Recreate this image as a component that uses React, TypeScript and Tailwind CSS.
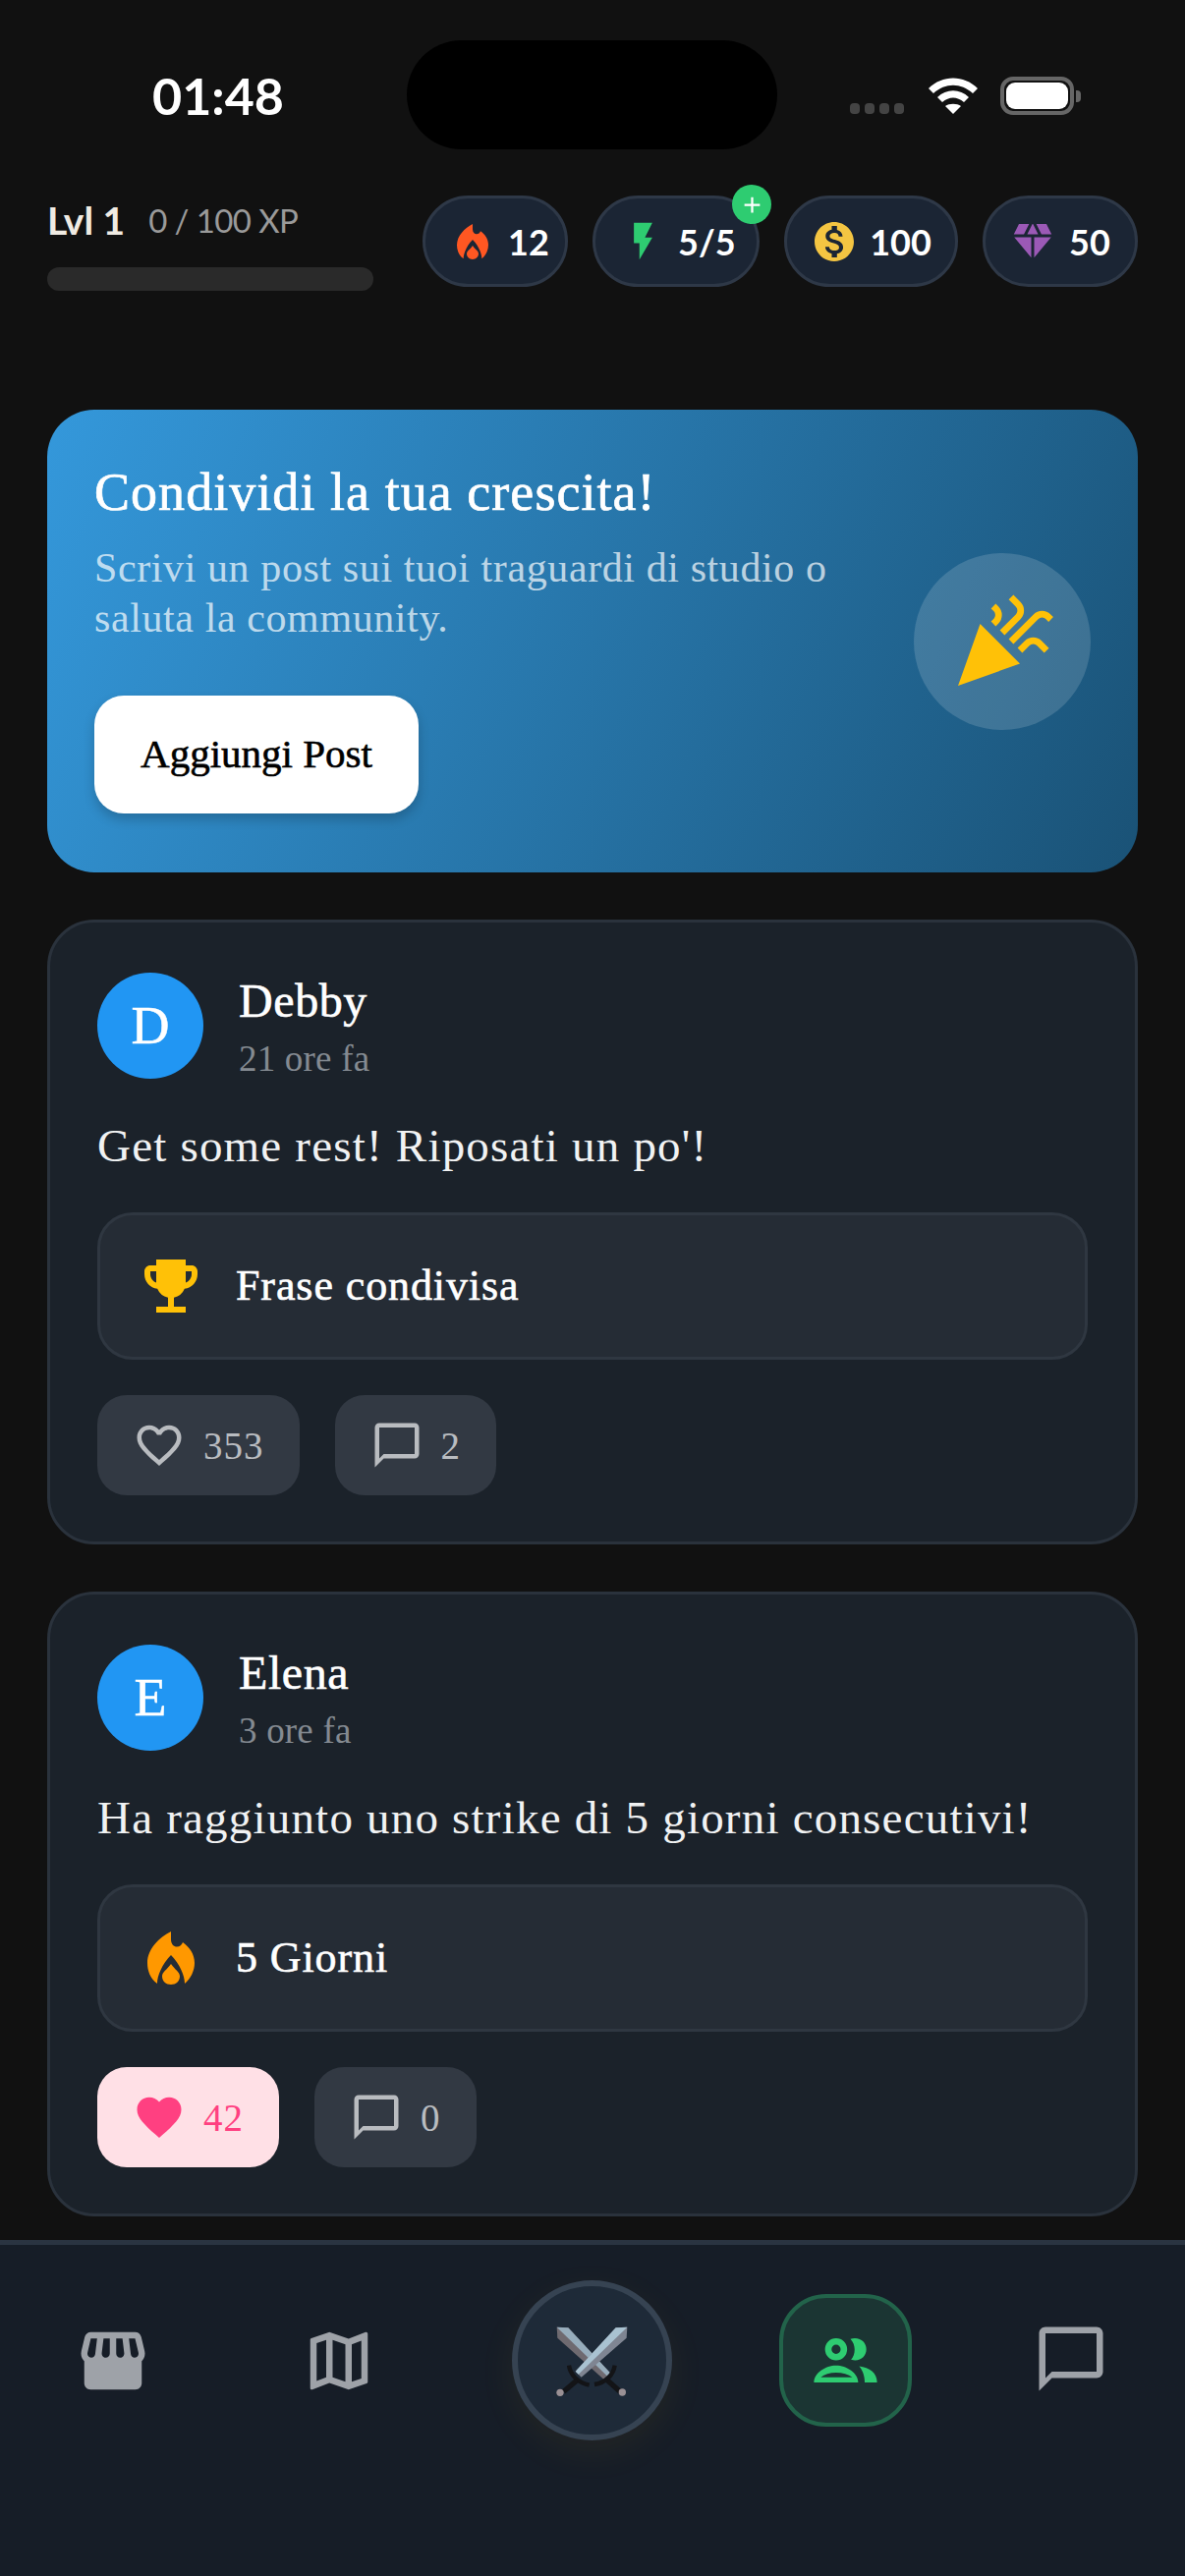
import React from "react";
import {
  MdAdd,
  MdCelebration,
  MdChatBubbleOutline,
  MdDiamond,
  MdEmojiEvents,
  MdFavorite,
  MdFavoriteBorder,
  MdFlashOn,
  MdMonetizationOn,
  MdOutlineMap,
} from "react-icons/md";

function Wifi() {
  return (
    <svg width="50" height="37" viewBox="0 0 50 37" fill="#fff">
      <path d="M0 11C14 -3 36 -3 50 11L45 16C33 5 17 5 5 16Z" />
      <path d="M9 20C18 11 32 11 41 20L36 25C29 19 21 19 14 25Z" />
      <path d="M17 29C21 26 29 26 33 29L25 37Z" />
    </svg>
  );
}

function Flame({ width, height, color }: { width: number; height: number; color: string }) {
  return (
    <svg width={width} height={height} viewBox="0 0 48 54" fill={color}>
      <path d="M10 53C3 48 0 40 0 32C0 18 12 6 24 0L24 8C24 13 27 15.5 30 15.5C33 15.5 35 13.5 36 11C43 16 48 23 48 32C48 40 44 48 38 53C38 45 33 33 24 24C15 33 10 45 10 53Z" />
      <path d="M24 33C28 39 33 41 33 45.5C33 50.5 29 54 24 54C19 54 15 50.5 15 45.5C15 41 20 39 24 33Z" />
    </svg>
  );
}

function Store() {
  return (
    <svg width="78" height="78" viewBox="0 0 24 24" fill="currentColor">
      <path d="M21.9 8.89l-1.05-4.37c-.22-.9-1-1.52-1.91-1.52H5.05c-.9 0-1.69.63-1.9 1.52L2.1 8.89c-.24 1.02-.02 2.06.62 2.88.08.11.19.19.28.29V19c0 1.1.9 2 2 2h14c1.1 0 2-.9 2-2v-6.94c.09-.09.2-.18.28-.28.64-.82.87-1.87.62-2.89zM18.91 4.99l1.05 4.37c.1.42.01.84-.25 1.17-.14.18-.44.47-.94.47-.61 0-1.14-.49-1.21-1.14L16.98 5l1.93-.01zM13 5h1.96l.54 4.52c.05.39-.07.78-.33 1.07-.22.26-.54.41-.95.41-.67 0-1.22-.59-1.22-1.31V5zM8.49 9.52L9.04 5H11v4.69C11 10.41 10.45 11 9.71 11c-.34 0-.65-.15-.89-.41-.25-.29-.37-.68-.33-1.07zM4.04 9.36L5.05 5h1.97l-.58 4.86c-.08.65-.6 1.14-1.21 1.14-.49 0-.8-.29-.93-.47-.27-.32-.36-.75-.26-1.17z" fillRule="evenodd" />
    </svg>
  );
}

function People() {
  return (
    <svg width="67" height="47" viewBox="140 175 202 142" fill="currentColor">
      <circle cx="212" cy="212" r="24" fill="none" stroke="currentColor" strokeWidth="20" />
      <path d="M256 180C285 172 305 190 305 212C305 234 285 252 258 244C272 228 274 198 256 180Z" />
      <path
        fillRule="evenodd"
        d="M144 314C144 285 180 262 212 262C244 262 280 285 280 314ZM165 298H262C250 290 232 284 212 284C192 284 176 290 165 298Z"
      />
      <path d="M283 264C315 268 338 284 338 314H300C300 296 295 278 283 264Z" />
    </svg>
  );
}

function Swords() {
  return (
    <svg width="75" height="72" viewBox="200 200 225 216">
      <polygon points="205,205 240,207 368,345 348,364 207,238" fill="#6f6a70" />
      <polygon points="205,205 240,207 368,345 358,354" fill="#97adbc" />
      <path d="M242 322C246 350 268 374 304 382" fill="none" stroke="#131417" strokeWidth="13" />
      <path d="M360 368L398 402" stroke="#131417" strokeWidth="16" />
      <polygon points="420,205 385,207 262,340 280,358 418,238" fill="#7f8592" />
      <polygon points="420,205 385,207 262,340 271,349" fill="#a9c2d1" />
      <path d="M382 322C378 350 356 374 320 380" fill="none" stroke="#131417" strokeWidth="13" />
      <path d="M266 368L226 402" stroke="#131417" strokeWidth="16" />
      <circle cx="215" cy="405" r="11" fill="#9a9094" />
      <circle cx="405" cy="404" r="11" fill="#9a9094" />
    </svg>
  );
}

function Stat({
  icon,
  value,
  textClass,
  badge,
}: {
  icon: React.ReactNode;
  value: string;
  textClass: string;
  badge?: boolean;
}) {
  return (
    <div className="relative flex h-[93px] items-center gap-[12px] rounded-full border-[3px] border-[#2e3847] bg-[#1b2534] px-[24px]">
      <div className="flex h-[48px] w-[48px] items-center justify-center">{icon}</div>
      <span className={`text-center text-[36px] font-bold leading-none text-white ${textClass}`}>{value}</span>
      {badge && (
        <div className="absolute right-[-15px] top-[-14px] flex h-[40px] w-[40px] items-center justify-center rounded-full bg-[#2ecc71]">
          <MdAdd size={27} color="#fff" />
        </div>
      )}
    </div>
  );
}

function Action({ icon, count, liked }: { icon: React.ReactNode; count: string; liked?: boolean }) {
  return (
    <div
      className={`flex h-[102px] items-center gap-[18px] rounded-[30px] px-[36px] ${
        liked ? "bg-[#ffe0e6] text-[#ff4081]" : "bg-[#323943] text-[#b9bcc0]"
      }`}
    >
      {icon}
      <span className="text-[39px] leading-none tracking-[1px]">{count}</span>
    </div>
  );
}

function Post({
  initial,
  name,
  time,
  body,
  boxIcon,
  boxText,
  actions,
  className,
}: {
  initial: string;
  name: string;
  time: string;
  body: string;
  boxIcon: React.ReactNode;
  boxText: string;
  actions: React.ReactNode;
  className?: string;
}) {
  return (
    <div className={`h-[636px] rounded-[48px] border-[3px] border-[#2a323c] bg-[#1b222a] p-[48px] ${className ?? ""}`}>
      <div className="flex h-[114px] items-center gap-[36px]">
        <div className="flex h-[108px] w-[108px] items-center justify-center rounded-full bg-[#2196f3] text-[54px] text-white [-webkit-text-stroke:0.5px_#fff]">
          {initial}
        </div>
        <div className="flex flex-col pt-[5px]">
          <span className="text-[48px] leading-[60px] tracking-[0.6px] text-white [-webkit-text-stroke:0.6px_#fff]">{name}</span>
          <span className="mt-[2px] text-[37px] leading-[54px] tracking-[0.2px] text-[#848a91]">{time}</span>
        </div>
      </div>
      <p className="mt-[32px] text-[47px] leading-[66px] tracking-[1.2px] text-[#f1f2f3]">{body}</p>
      <div className="mt-[35px] flex h-[150px] items-center gap-[30px] rounded-[36px] border-[3px] border-[#2f3741] bg-[#252c35] pl-[36px]">
        <div className="flex h-[72px] w-[72px] items-center justify-center">{boxIcon}</div>
        <span className="text-[44px] leading-none tracking-[0.9px] text-white [-webkit-text-stroke:0.6px_#fff]">{boxText}</span>
      </div>
      <div className="mt-[36px] flex gap-[36px]">{actions}</div>
    </div>
  );
}

export default function App() {
  return (
    <div className="flex h-[2622px] w-[1206px] flex-col overflow-hidden bg-[#111111] font-['Liberation_Serif',serif]">
      <div className="flex flex-none flex-col font-['Lato',sans-serif]">
        <div className="mt-[41px] flex h-[111px] items-center pl-[155px]">
          <span className="w-[259px] text-[52px] font-bold leading-none text-white">01:48</span>
          <div className="h-[111px] w-[377px] rounded-[56px] bg-black" />
          <div className="ml-[74px] flex items-end gap-[5px] self-start pt-[64px]">
            <div className="h-[11px] w-[10px] rounded-[4px] bg-[#444]" />
            <div className="h-[11px] w-[10px] rounded-[4px] bg-[#444]" />
            <div className="h-[11px] w-[10px] rounded-[4px] bg-[#444]" />
            <div className="h-[11px] w-[10px] rounded-[4px] bg-[#444]" />
          </div>
          <div className="ml-[25px] self-start pt-[38px]">
            <Wifi />
          </div>
          <div className="ml-[23px] flex items-center self-start pt-[37px]">
            <div className="h-[39px] w-[75px] rounded-[13px] border-[4px] border-[#666] p-[2px]">
              <div className="h-full w-full rounded-[9px] bg-white" />
            </div>
            <div className="ml-[2px] h-[12px] w-[5px] rounded-r-[4px] bg-[#666]" />
          </div>
        </div>

        <div className="mt-[47px] flex h-[93px] items-start justify-between px-[48px]">
          <div className="w-[332px]">
            <div className="flex h-[50px] items-center gap-[24px]">
              <span className="text-[39px] font-bold leading-none text-[#f0ebe3]">Lvl 1</span>
              <span className="text-[33px] leading-none tracking-[-0.6px] text-[#9a9a9a]">0 / 100 XP</span>
            </div>
            <div className="mt-[23px] h-[24px] rounded-full bg-[#2a2a2a]" />
          </div>
          <div className="flex gap-[25px]">
            <Stat icon={<Flame width={32} height={36} color="#ff5722" />} value="12" textClass="w-[34px]" />
            <Stat icon={<MdFlashOn size={45} color="#2ecc71" />} value="5/5" textClass="w-[56px]" badge />
            <Stat icon={<MdMonetizationOn size={48} color="#f4c542" />} value="100" textClass="w-[63px]" />
            <Stat icon={<MdDiamond size={48} color="#9b59b6" />} value="50" textClass="w-[44px]" />
          </div>
        </div>
      </div>

      <div className="min-h-0 flex-1 px-[48px]">
        <div className="mt-[125px] flex h-[471px] items-center justify-between rounded-[48px] bg-[linear-gradient(113deg,#3498db,#1a5276)] px-[48px] py-[54px]">
          <div className="mb-[6px] w-[800px]">
            <h2 className="text-[54px] leading-[60px] tracking-[1.05px] text-white [-webkit-text-stroke:0.7px_#fff]">Condividi la tua crescita!</h2>
            <p className="mt-[22px] text-[42px] leading-[51px] tracking-[0.6px] text-white/70">
              Scrivi un post sui tuoi traguardi di studio o saluta la community.
            </p>
            <div className="mt-[53px] flex h-[120px] w-[330px] items-center justify-center rounded-[30px] bg-white text-[41px] text-black shadow-[0_6px_12px_rgba(0,0,0,0.2)] [-webkit-text-stroke:0.6px_#000]">
              Aggiungi Post
            </div>
          </div>
          <div className="flex h-[180px] w-[180px] items-center justify-center rounded-full bg-white/15">
            <MdCelebration size={108} color="#ffc107" />
          </div>
        </div>

        <Post
          className="mt-[48px]"
          initial="D"
          name="Debby"
          time="21 ore fa"
          body="Get some rest! Riposati un po'!"
          boxIcon={<MdEmojiEvents size={72} color="#ffc107" />}
          boxText="Frase condivisa"
          actions={
            <>
              <Action icon={<MdFavoriteBorder size={54} />} count="353" />
              <Action icon={<MdChatBubbleOutline size={54} />} count="2" />
            </>
          }
        />
        <Post
          className="mt-[48px]"
          initial="E"
          name="Elena"
          time="3 ore fa"
          body="Ha raggiunto uno strike di 5 giorni consecutivi!"
          boxIcon={<Flame width={48} height={54} color="#ff9800" />}
          boxText="5 Giorni"
          actions={
            <>
              <Action liked icon={<MdFavorite size={54} />} count="42" />
              <Action icon={<MdChatBubbleOutline size={54} />} count="0" />
            </>
          }
        />
      </div>

      <div className="h-[342px] flex-none border-t-[5px] border-[#2a3441] bg-[#161d27] pl-[47px] pt-[36px]">
        <div className="flex items-center text-[#9ea2a8]">
          <div className="flex w-[135px] justify-center">
            <Store />
          </div>
          <div className="ml-[95px] flex w-[135px] justify-center">
            <MdOutlineMap size={78} />
          </div>
          <div className="ml-[109px] flex h-[163px] w-[163px] items-center justify-center rounded-full border-[6px] border-[#364352] bg-[#1e2a38] shadow-[0_12px_40px_rgba(255,193,7,0.06)]">
            <Swords />
          </div>
          <div className="ml-[109px] flex h-[135px] w-[135px] items-center justify-center rounded-[48px] border-[4px] border-[#22634a] bg-[#1b3533] text-[#2ecc71]">
            <People />
          </div>
          <div className="ml-[94px] flex w-[135px] -translate-y-[2px] justify-center">
            <MdChatBubbleOutline size={78} />
          </div>
        </div>
      </div>
    </div>
  );
}
